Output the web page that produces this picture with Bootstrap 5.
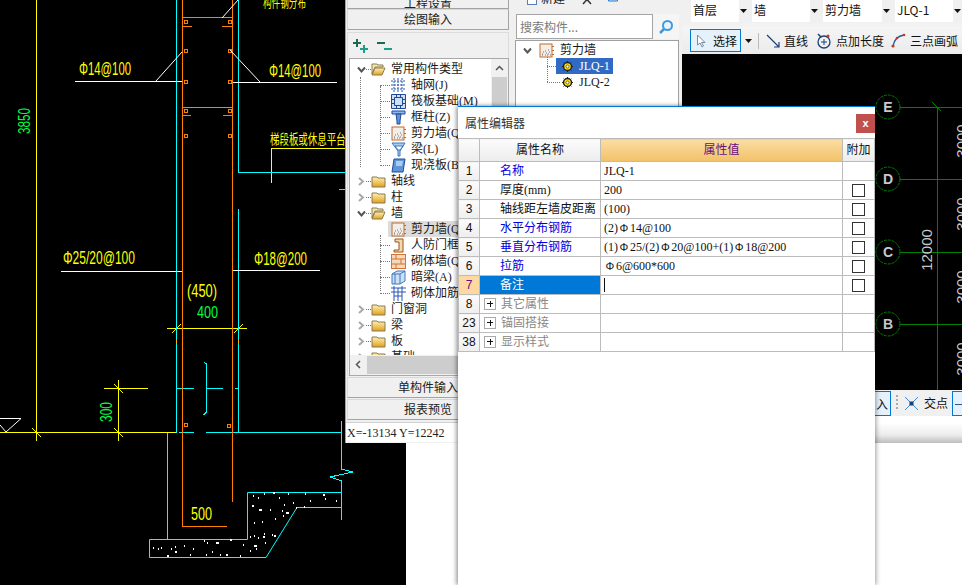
<!DOCTYPE html>
<html lang="zh-CN">
<head>
<meta charset="utf-8">
<title>属性编辑器</title>
<link href="https://cdn.jsdelivr.net/npm/bootstrap@5.3.0/dist/css/bootstrap.min.css" rel="stylesheet">
<style>
html,body{width:962px;height:585px;overflow:hidden;background:#000;margin:0}
body{position:relative;font:12px/16px "Liberation Serif","Noto Sans CJK SC",sans-serif;color:#1a1a1a}
.desk-sheet{position:absolute;left:406px;top:443px;width:556px;height:142px;background:#fff}
.cad-left{position:absolute;left:0;top:0;width:406px;height:585px}
.cad-right{position:absolute;left:682px;top:54px;width:280px;height:340px}
.cad-text{font-family:"Liberation Sans",sans-serif}
.cad-cjk{font-family:"Noto Sans CJK SC",sans-serif}

.win-nav{position:absolute;left:345px;top:0;width:165px;height:443px;background:#f0f0f0;border-left:1px solid #a0a0a0}
.nav-bar{height:21px;margin:0 0 1px 1px;width:162px;background:#f0f0f0;border:1px solid #a3a3a3;border-top-color:#d8d8d8;border-left-color:#d8d8d8;color:#222;border-radius:0;padding:0;font-size:12px;line-height:18px}
.nav-bar.clip-top{height:9px;line-height:0;border-top:0;padding-top:0;overflow:hidden;margin-bottom:0}
.nav-group{height:344px;margin:2px 0 1px 1px;width:162px;border:1px solid #dcdcdc}
.nav-tools{height:25px;padding-left:4px;gap:7px}
.tree-box{width:160px;height:318px;margin-left:1px;border:1px solid #a9a9a9;background:#fff;position:relative;overflow:hidden}
.tree-rows{height:296px;overflow:hidden;padding-top:2px}
.tree-row{height:16px;display:flex;align-items:center;white-space:nowrap;position:relative}
.tree-row svg{flex:none}
.lvl-root{padding-left:7px}
.lvl-kid{padding-left:41px}
.lvl-kid::before{content:"";position:absolute;left:30px;width:10px;top:8px;border-top:1px dotted #777}
.lvl-root::before{content:"";position:absolute;left:16px;width:5px;top:8px;border-top:1px dotted #777}
.tree-row .arrow{width:9px;margin-right:5px;background:#fff;position:relative}
.tree-row .ico{margin-right:5px;position:relative;background:#fff}
.row-current{background:#dcdcdc;margin-left:38px;padding-left:3px;width:120px}
.row-current .ico{background:transparent}
.guide-v{position:absolute;border-left:1px dotted #777;width:0}
.guide-h{position:absolute;border-top:1px dotted #777;height:0}
.g-top-root{left:10px;top:18px;height:90px}
.g-top-kid{left:30px;top:27px;height:76px}
.g-wall-kid{left:30px;top:176px;height:56px}
.vbar{position:absolute;right:0;top:0;width:17px;height:297px;background:#f0f0f0}
.vthumb{position:absolute;left:1px;top:18px;width:15px;height:200px;background:#cdcdcd}
.vup{position:absolute;left:4px;top:6px}
.hbar{position:absolute;left:0;bottom:0;height:20px;width:100%;background:#f0f0f0}
.hthumb{position:absolute;left:17px;top:1px;height:18px;width:140px;background:#cdcdcd}
.hleft{position:absolute;left:5px;top:5px}
.nav-status{height:20px;margin-top:2px;padding-left:1px;background:#fff;border-top:1px solid #d0d0d0;line-height:20px;color:#222}

.win-list{position:absolute;left:510px;top:0;width:172px;height:110px;background:#f0f0f0}
.list-tools{height:13px;padding-left:17px;overflow:hidden;align-items:flex-start}
.list-tools svg{margin-top:-5px}
.list-tools span{line-height:13px;margin:-7px 0 0 4px;width:41px}
.tool-del{margin-right:12px}
.search-row{height:25px;margin:1px 2px 0 6px}
.search-input{width:137px;height:25px;font:12px/20px "Noto Sans CJK SC",sans-serif;border:1px solid #a5a5a5;border-radius:0;padding:0 3px;color:#777;background:#fff}
.search-input::placeholder{color:#7b7b7b;opacity:1}
.search-btn{width:26px;height:25px;background:#f5f5f5;padding:0;border:0;border-radius:0}
.list-tree{width:164px;height:68px;margin:1px 0 0 5px;border:1px solid #a0a0a0;background:#fff;position:relative}
.lt-v{left:31px;top:14px;height:27px}
.lt-h1{left:31px;top:25px;width:9px}
.lt-h2{left:31px;top:41px;width:13px}
.pick-row{position:absolute;height:16px;line-height:16px;display:flex;align-items:center;white-space:nowrap}
.pick-root{left:7px;top:1px}
.pick-root .pick-arrow{margin-right:7px}
.pick-root .pick-ico{margin-right:6px}
.pick-one{left:40px;top:17px;width:57px;padding-left:6px}
.pick-two{left:46px;top:33px}
.pick-gear{margin-right:6px;position:relative}
.pick-on{background:#316ac5;color:#fff}

.win-top{position:absolute;left:682px;top:0;width:280px;height:54px;background:#f2f2f2}
.combo-row{height:23px;padding-left:9px;background:#f0f0f0}
.combo-pick{height:22px;display:flex;background:#fff;font:12px/20px "Noto Sans CJK SC",sans-serif;color:#111;padding-left:2px}
.combo-pick b{font-weight:400;flex:1}
.cp-a{width:57px;margin-right:4px}
.cp-b{width:67px;margin-right:4px}
.cp-c{width:68px;margin-right:4px}
.cp-d{width:67px}
.combo-caret{width:9px;background:#f0f0f0;display:flex;align-items:center;justify-content:center;padding-bottom:1px}
.tool-row{margin-top:4px;height:27px;padding-left:8px;background:linear-gradient(#f5f5f5,#ebebeb);font:12px/16px "Noto Sans CJK SC",sans-serif;color:#111}
.tool-on{width:51px;height:23px;border:1px solid #0078d7;background:#e5f1fb;display:flex;align-items:center;padding-left:5px;gap:7px}
.tool-caret{margin:0 6px 0 4px}
.tool-sep{width:1px;height:16px;background:#bcbcbc}
.tool-item{display:flex;align-items:center;gap:4px;white-space:nowrap;margin-left:8px}
.tool-item.first-item{margin-left:7px}
.tool-item.last-item{margin-left:7px}

.win-strip{position:absolute;left:875px;top:390px;width:87px;height:53px;background:#fff;overflow:hidden}
.strip-tools{height:26px;background:#f0f0f0;font:12px/16px "Noto Sans CJK SC",sans-serif;color:#111;align-items:center;white-space:nowrap}
.strip-tools>*{flex:none}
.strip-on{width:16px;height:25px;border:1px solid #0078d7;border-left:0;background:#e5f1fb;line-height:23px;padding-left:1px}
.strip-on-end{width:12px;height:25px;border:1px solid #0078d7;border-right:0;background:#e5f1fb;position:relative;margin-left:4px}
.strip-on-end i{position:absolute;left:2px;right:0;top:12px;height:1px;background:#2b579a}
.strip-grip{width:2px;height:16px;margin:0 6px 0 5px;background:repeating-linear-gradient(#aaa 0 2px,transparent 2px 4px)}
.strip-x{margin-right:5px}
.strip-gap{height:7px;background:#fff}
.strip-grad{height:20px;background:linear-gradient(#fff,#ececec 60%,#bdbdbd)}

.dlg{position:absolute;left:458px;top:106px;width:417px;height:479px;background:#fff;border-top:1px solid #0078d7;box-shadow:-2px 0 4px rgba(0,0,0,.35),2px 0 4px rgba(0,0,0,.25)}
.dlg-head{height:31px;padding:0 0 0 7px;align-items:center;font:12px/16px "Noto Sans CJK SC",sans-serif;color:#333}
.dlg-close{position:absolute;right:0;top:7px;width:19px;height:19px;background:#c0504d;color:#fff;padding:0;border:0;border-radius:0;font:700 11px/17px "Liberation Sans",sans-serif}
.prop-table.table{width:416px;margin:0;table-layout:fixed;border-collapse:collapse;border-color:#bcbcbc;font-size:12px}
.prop-table.table>:not(caption)>*>*{padding:0;height:19px;border:1px solid #bcbcbc;line-height:17px;vertical-align:middle;color:#111;white-space:nowrap;overflow:hidden;font-weight:400;box-shadow:none;background:transparent}
.col-no{width:21px}.col-name{width:121px}.col-val{width:242px}.col-add{width:32px}
.prop-table.table thead th{height:23px;background:linear-gradient(#fcfcfc,#ececec);text-align:center}
.prop-table.table thead th.head-on{background:linear-gradient(#fbdda3,#f2c168);color:#6a0f80}
.prop-table.table td.cell-no{background:linear-gradient(#fbfbfb,#eeeeee);text-align:center;font-family:"Liberation Sans",sans-serif}
.prop-table.table td.cell-no-on{background:#fdd9a0;color:#6a0f80}
.prop-table.table td.cell-name{padding-left:20px}
.prop-table.table td.cell-link{color:#0000e0}
.prop-table.table td.cell-on{background:#0078d7;color:#fff}
.prop-table.table td.cell-val{padding-left:3px}
.prop-table.table td.cell-mute{color:#888;padding-left:4px}
.prop-table.table td.cell-tick{text-align:center}
.tick-box{width:13px;height:13px;margin:2px 0 0;border:1px solid #333;display:inline-block;vertical-align:top}
.plus-box{display:inline-block;width:12px;height:12px;border:1px solid #aaa;margin-right:5px;vertical-align:-2px;position:relative}
.plus-box::before{content:"";position:absolute;left:2px;right:2px;top:4.5px;height:1px;background:#111}
.plus-box::after{content:"";position:absolute;top:2px;bottom:2px;left:4.5px;width:1px;background:#111}
.caret-bar{display:inline-block;width:1px;height:14px;background:#111;vertical-align:-3px}
.rebar{display:inline-block;width:12px;text-align:center;font-family:"Liberation Sans",sans-serif;font-size:11px}
</style>
</head>
<body>
<svg width="0" height="0" class="d-block position-absolute">
<defs>
<linearGradient id="fold" x1="0" y1="0" x2="0" y2="1"><stop offset="0" stop-color="#fff2b0"/><stop offset="1" stop-color="#e0a020"/></linearGradient>
<symbol id="i-folder" viewBox="0 0 15 13"><path d="M1 2h5l1 1h7v9H1z" fill="url(#fold)" stroke="#8a7a50"/></symbol>
<symbol id="i-open" viewBox="0 0 15 13"><path d="M1 1h5l1 1h5v2H4L1 11z" fill="#f8e9b0" stroke="#8a7a50"/><path d="M1 12l3-7h10l-3 7z" fill="url(#fold)" stroke="#8a7a50"/></symbol>
<symbol id="i-grid" viewBox="0 0 15 15"><path d="M3 0v15M7 0v15M11 0v15M0 3h15M0 7h15M0 11h15" stroke="#2a55b0" stroke-dasharray="2 1" fill="none"/></symbol>
<symbol id="i-raft" viewBox="0 0 15 15"><path d="M.5.5h14v14H.5zM3.5 3.5h8v8h-8z" stroke="#1f4a9a" fill="#cfe0f5"/><path d="M5.5.5v3M9.5.5v3M5.5 11.5v3M9.5 11.5v3M.5 5.5h3M.5 9.5h3M11.5 5.5h3M11.5 9.5h3" stroke="#1f4a9a"/></symbol>
<symbol id="i-col" viewBox="0 0 15 15"><path d="M1 1h13v3H1z" fill="#8fb8e8" stroke="#1f4a9a"/><path d="M5 4h5l-1 7v3H6v-3z" fill="#5f95d8" stroke="#1f4a9a"/></symbol>
<symbol id="i-wall" viewBox="0 0 15 15"><rect x="1" y="1" width="12" height="13" fill="#f3eee8" stroke="#c46a2a"/><path d="M3 11h1M6 12h1M9 11h1M11 12h1M4 9h1M7 10h1M10 9h1M3 12h1M8 12h1M6 8h1M9 7h1" stroke="#777"/><path d="M14 3v1M14 7v1M14 11v1" stroke="#c46a2a" stroke-width="2"/></symbol>
<symbol id="i-beam" viewBox="0 0 15 15"><path d="M1 1h13L9 9v5H7V9z" fill="#a9cdf0" stroke="#3a78c0"/><path d="M4 4h8l-3 4H7z" fill="#fff" stroke="#3a78c0"/></symbol>
<symbol id="i-slab" viewBox="0 0 15 15"><path d="M3 1h11l-2 13H1z" fill="#5f95d8" stroke="#1f4a9a"/><path d="M5 3h7l-1 5H5z" fill="#a9cdf0"/></symbol>
<symbol id="i-door" viewBox="0 0 15 15"><path d="M4 1h8v13H3v-2h5V4H4z" fill="#f3d9b0" stroke="#a0521a"/></symbol>
<symbol id="i-brick" viewBox="0 0 15 15"><rect x="0.500" y="0.500" width="14" height="14" fill="#f7d8b8" stroke="#d0743a"/><path d="M.5 5h14M.5 10h14M5 .5V5M10 5v5M5 10v4.500" stroke="#d0743a"/></symbol>
<symbol id="i-hide" viewBox="0 0 15 15"><path d="M1 4l5-3h8v10l-5 3H1z" fill="#cfe0f5" stroke="#3a78c0"/><path d="M1 4h8v10M9 4l5-3" stroke="#3a78c0" fill="none"/><path d="M4 4v10" stroke="#3a78c0"/></symbol>
<symbol id="i-rein" viewBox="0 0 15 15"><path d="M0 2h15M0 6h15M3 0v15M11 0v15M7 2v13M3 10h8" stroke="#2a55b0" fill="none"/></symbol>
<symbol id="i-chev" viewBox="0 0 9 9"><path d="M2 1l4 3.500L2 8" stroke="#a8a8a8" stroke-width="2" fill="none"/></symbol>
<symbol id="i-down" viewBox="0 0 9 9"><path d="M1 2.500l3.500 4 3.500-4" stroke="#555" stroke-width="2" fill="none"/></symbol>
<symbol id="i-gear" viewBox="0 0 11 11"><circle cx="5.500" cy="5.500" r="4" fill="#ffe000" stroke="#222" stroke-width="1.500"/><circle cx="5.500" cy="5.500" r="1.500" fill="#fff" stroke="#222" stroke-width=".6"/><path d="M5.500 0v1.500M5.500 9.500V11M0 5.500h1.500M9.500 5.500H11M1.600 1.600l1 1M8.400 8.400l1 1M1.600 9.400l1-1M8.400 2.600l1-1" stroke="#222"/></symbol>
<symbol id="i-caret" viewBox="0 0 7 4"><path d="M0 0h7L3.500 4z" fill="#111"/></symbol>
</defs>
</svg>

<div class="desk-sheet"></div>

<!-- left CAD detail drawing -->
<svg class="cad-left" viewBox="0 0 406 585" shape-rendering="crispEdges">
  <g stroke="#ffff00" fill="none">
    <path d="M36.500 0V441M0 432.500H176M118.500 380V441M104 388.500H148M167 328.500H247M271.500 183V148.500H345"/>
    <path d="M32 428l9 9M114 428l9 9M114 384l9 9M172 333l9-9M234 333l9-9"/>
  </g>
  <g stroke="#00ffff" fill="none">
    <path d="M176.500 0V432.500M238.500 0V172.500H345M238.500 208.500V432.500M238.500 432.500H341.500M179 432.500H194M206 432.500H238M176.500 388.500H194M206.500 388.500H223M235 388.500H238.500M167.500 432.500V539.500"/>
    <path d="M204 362l2.500 2V412l-3 3"/>
    <path d="M341.500 421V469L353 472 330 477 341.500 481V520"/>
    <path d="M149.500 539.500H247.500V492.500H341.500M341.500 507.500H297L266 557.500H149.500V539.500" shape-rendering="auto"/>
    <path d="M339 189h6"/>
  </g>
  <g stroke="#ff7f00" fill="none">
    <path d="M182.500 0V526.500H227M232.500 0V502M182 17.500H232M182 26.500H192M222 26.500H232M182 107.500H232M182 115.500H191M223 115.500H232"/>
    <path d="M184 20h3v3h-3zM228 20h3v3h-3zM184 49h3v3h-3zM228 49h3v3h-3zM184 80h3v3h-3zM228 80h3v3h-3zM184 109h3v3h-3zM228 109h3v3h-3zM184 134h3v3h-3zM228 134h3v3h-3zM184 423h3v3h-3zM227 424h3v3h-3z"/>
  </g>
  <path d="M176 340h1v3h-1zM238 340h1v3h-1z" fill="#ffb000"/>
  <g stroke="#fff" fill="none">
    <path d="M75 81.500H182M233 82.500H337M61 271.500H182M233 270.500H320"/>
    <path d="M156 81l26-29M260 82L230 50M222 18L238 0M0 418.500H21L6 432 0 425" shape-rendering="auto"/>
    <path d="M253 496h1M258 498h1M264 494h1M273 493h2M288 494h1M305 494h1M323 495h2M325 499h1M336 501h1M310 501h1M293 503h1M279 498h1M284 505h1M252 506h2M259 510h3M270 510h1M282 511h1M286 513h3M296 508h1M304 507h1M254 523h1M262 522h1M275 519h1M283 516h1M264 534h1M250 537h1M258 538h1M274 536h2M263 537h2M153 548h1M158 549h1M161 548h1M171 549h1M175 547h1M184 546h1M193 549h1M204 541h1M207 543h1M216 543h3M230 540h2M243 545h1M254 546h3M256 549h1M250 551h1M167 556h2M175 552h2M190 555h1M206 555h1M212 552h1M220 555h1M226 555h2M240 556h1M265 543h1M272 535h1M254 536h1" stroke-width="1.300"/>
  </g>
  <g class="cad-text" fill="#ffff00" font-size="18">
    <text x="79" y="75" textLength="52" lengthAdjust="spacingAndGlyphs">Φ14@100</text>
    <text x="269" y="77" textLength="52" lengthAdjust="spacingAndGlyphs">Φ14@100</text>
    <text x="63" y="264" textLength="72" lengthAdjust="spacingAndGlyphs">Φ25/20@100</text>
    <text x="254" y="265" textLength="53" lengthAdjust="spacingAndGlyphs">Φ18@200</text>
    <text x="187" y="297" textLength="30" lengthAdjust="spacingAndGlyphs">(450)</text>
    <text x="191" y="520" textLength="21" lengthAdjust="spacingAndGlyphs">500</text>
  </g>
  <g class="cad-cjk" fill="#ffff00">
    <text x="263" y="7" font-size="13" textLength="43" lengthAdjust="spacingAndGlyphs">构件钢分布</text>
    <text x="270" y="144" font-size="14" textLength="85" lengthAdjust="spacingAndGlyphs">梯段板或休息平台板</text>
  </g>
  <g class="cad-text" fill="#00ff40" font-size="17">
    <text x="197" y="318" textLength="21" lengthAdjust="spacingAndGlyphs">400</text>
    <text transform="translate(30 134) rotate(-90)" textLength="26" lengthAdjust="spacingAndGlyphs">3850</text>
    <text transform="translate(112 422) rotate(-90)" textLength="20" lengthAdjust="spacingAndGlyphs">300</text>
  </g>
</svg>

<!-- right CAD plan -->
<svg class="cad-right" viewBox="0 0 280 340">
  <g stroke="#008000" fill="none" shape-rendering="crispEdges">
    <path d="M218 53.500H280M255.500 53.500V340M218 125.500H280M218 198.500H280M218 270.500H280"/>
  </g>
  <path d="M250 48l9 9" stroke="#008000"/>
  <g stroke="#008000" fill="none" stroke-dasharray="3 1">
    <circle cx="206" cy="53" r="12"/><circle cx="206" cy="125" r="12"/><circle cx="206" cy="198" r="12"/><circle cx="206" cy="270" r="12"/>
  </g>
  <g class="cad-text" fill="#c8c8c8" font-size="14" font-weight="700" text-anchor="middle">
    <text x="206" y="58">E</text><text x="206" y="130">D</text><text x="206" y="203">C</text><text x="206" y="275">B</text>
  </g>
  <g class="cad-text" fill="#c8c8c8" font-size="15" text-anchor="middle">
    <text transform="translate(250 196) rotate(-90)">12000</text>
    <text transform="translate(285 87) rotate(-90)">3000</text>
    <text transform="translate(285 160) rotate(-90)">3000</text>
    <text transform="translate(285 233) rotate(-90)">3000</text>
    <text transform="translate(285 305) rotate(-90)">3000</text>
  </g>
</svg>

<!-- navigation window -->
<div class="win-nav">
  <button class="btn nav-bar clip-top d-block">工程设置</button>
  <button class="btn nav-bar d-block">绘图输入</button>
  <div class="nav-group">
    <div class="d-flex align-items-center nav-tools">
      <svg width="17" height="15" viewBox="0 0 17 15"><path d="M1 5h8M5 1v8" stroke="#1d6b4f" stroke-width="2"/><path d="M8 11h8M12 7v8" stroke="#1aa08a" stroke-width="2"/></svg>
      <svg width="17" height="15" viewBox="0 0 17 15"><path d="M1 5h8" stroke="#1d6b4f" stroke-width="2"/><path d="M8 11h8" stroke="#1aa08a" stroke-width="2"/></svg>
    </div>
    <div class="tree-box">
      <div class="guide-v g-top-root"></div>
      <div class="guide-v g-top-kid"></div>
      <div class="guide-v g-wall-kid"></div>
      <div class="tree-rows">
        <div class="tree-row lvl-root"><svg class="arrow" width="9" height="9"><use href="#i-down"/></svg><svg class="ico" width="15" height="13"><use href="#i-open"/></svg>常用构件类型</div>
        <div class="tree-row lvl-kid"><svg class="ico" width="15" height="15"><use href="#i-grid"/></svg>轴网(J)</div>
        <div class="tree-row lvl-kid"><svg class="ico" width="15" height="15"><use href="#i-raft"/></svg>筏板基础(M)</div>
        <div class="tree-row lvl-kid"><svg class="ico" width="15" height="15"><use href="#i-col"/></svg>框柱(Z)</div>
        <div class="tree-row lvl-kid"><svg class="ico" width="15" height="15"><use href="#i-wall"/></svg>剪力墙(Q)</div>
        <div class="tree-row lvl-kid"><svg class="ico" width="15" height="15"><use href="#i-beam"/></svg>梁(L)</div>
        <div class="tree-row lvl-kid"><svg class="ico" width="15" height="15"><use href="#i-slab"/></svg>现浇板(B)</div>
        <div class="tree-row lvl-root"><svg class="arrow" width="9" height="9"><use href="#i-chev"/></svg><svg class="ico" width="15" height="13"><use href="#i-folder"/></svg>轴线</div>
        <div class="tree-row lvl-root"><svg class="arrow" width="9" height="9"><use href="#i-chev"/></svg><svg class="ico" width="15" height="13"><use href="#i-folder"/></svg>柱</div>
        <div class="tree-row lvl-root"><svg class="arrow" width="9" height="9"><use href="#i-down"/></svg><svg class="ico" width="15" height="13"><use href="#i-open"/></svg>墙</div>
        <div class="tree-row row-current"><svg class="ico" width="15" height="15"><use href="#i-wall"/></svg>剪力墙(Q)</div>
        <div class="tree-row lvl-kid"><svg class="ico" width="15" height="15"><use href="#i-door"/></svg>人防门框(R)</div>
        <div class="tree-row lvl-kid"><svg class="ico" width="15" height="15"><use href="#i-brick"/></svg>砌体墙(Q)</div>
        <div class="tree-row lvl-kid"><svg class="ico" width="15" height="15"><use href="#i-hide"/></svg>暗梁(A)</div>
        <div class="tree-row lvl-kid"><svg class="ico" width="15" height="15"><use href="#i-rein"/></svg>砌体加筋(Y)</div>
        <div class="tree-row lvl-root"><svg class="arrow" width="9" height="9"><use href="#i-chev"/></svg><svg class="ico" width="15" height="13"><use href="#i-folder"/></svg>门窗洞</div>
        <div class="tree-row lvl-root"><svg class="arrow" width="9" height="9"><use href="#i-chev"/></svg><svg class="ico" width="15" height="13"><use href="#i-folder"/></svg>梁</div>
        <div class="tree-row lvl-root"><svg class="arrow" width="9" height="9"><use href="#i-chev"/></svg><svg class="ico" width="15" height="13"><use href="#i-folder"/></svg>板</div>
        <div class="tree-row lvl-root"><svg class="arrow" width="9" height="9"><use href="#i-chev"/></svg><svg class="ico" width="15" height="13"><use href="#i-folder"/></svg>基础</div>
      </div>
      <div class="vbar"><svg class="vup" width="9" height="6" viewBox="0 0 9 6"><path d="M1 5l3.500-3.500L8 5" stroke="#555" stroke-width="1.500" fill="none"/></svg><div class="vthumb"></div></div>
      <div class="hbar"><svg class="hleft" width="6" height="9" viewBox="0 0 6 9"><path d="M5 1L1.500 4.500 5 8" stroke="#555" stroke-width="1.500" fill="none"/></svg><div class="hthumb"></div></div>
    </div>
  </div>
  <button class="btn nav-bar d-block">单构件输入</button>
  <button class="btn nav-bar d-block">报表预览</button>
  <div class="nav-status">X=-13134 Y=12242</div>
</div>

<!-- component list window -->
<div class="win-list">
  <div class="d-flex list-tools">
    <svg width="10" height="10" viewBox="0 0 10 10"><rect x=".5" y=".5" width="9" height="9" fill="#fff" stroke="#5a7fb0"/></svg>
    <span>新建 · </span>
    <svg class="tool-del" width="10" height="10" viewBox="0 0 10 10"><path d="M1 0l8 9M9 0L1 9" stroke="#333" stroke-width="1.500"/></svg>
    <svg width="14" height="10" viewBox="0 0 14 10"><path d="M4.500 0v6h9V0M1 3h4" stroke="#2a78c8" fill="#cfe6fa"/></svg>
  </div>
  <div class="d-flex search-row">
    <input class="form-control search-input" type="text" placeholder="搜索构件...">
    <button class="btn search-btn d-flex align-items-center justify-content-center" aria-label="搜索">
      <svg width="16" height="16" viewBox="0 0 16 16"><circle cx="9.500" cy="6.500" r="4.500" fill="#e8f4fc" stroke="#3a9be0" stroke-width="2"/><path d="M6 10l-4 4" stroke="#3a9be0" stroke-width="2.500"/></svg>
    </button>
  </div>
  <div class="list-tree">
    <div class="guide-v lt-v"></div>
    <div class="guide-h lt-h1"></div>
    <div class="guide-h lt-h2"></div>
    <div class="pick-row pick-root"><svg class="pick-arrow" width="9" height="9"><use href="#i-down"/></svg><svg class="pick-ico" width="15" height="15"><use href="#i-wall"/></svg>剪力墙</div>
    <div class="pick-row pick-on pick-one"><svg class="pick-gear" width="11" height="11"><use href="#i-gear"/></svg>JLQ-1</div>
    <div class="pick-row pick-two"><svg class="pick-gear" width="11" height="11"><use href="#i-gear"/></svg>JLQ-2</div>
  </div>
</div>

<!-- top toolbars -->
<div class="win-top">
  <div class="d-flex combo-row">
    <div class="combo-pick cp-a"><b>首层</b><span class="combo-caret"><svg width="7" height="4"><use href="#i-caret"/></svg></span></div>
    <div class="combo-pick cp-b"><b>墙</b><span class="combo-caret"><svg width="7" height="4"><use href="#i-caret"/></svg></span></div>
    <div class="combo-pick cp-c"><b>剪力墙</b><span class="combo-caret"><svg width="7" height="4"><use href="#i-caret"/></svg></span></div>
    <div class="combo-pick cp-d"><b>JLQ-1</b><span class="combo-caret"><svg width="7" height="4"><use href="#i-caret"/></svg></span></div>
  </div>
  <div class="d-flex align-items-center tool-row">
    <div class="tool-on">
      <svg width="10" height="14" viewBox="0 0 10 14"><path d="M1.500 1v10l2.500-2 2 4 1.500-1-2-3.500H9z" fill="#fff" stroke="#7a8aa0"/></svg>
      <span>选择</span>
    </div>
    <svg class="tool-caret" width="7" height="4"><use href="#i-caret"/></svg>
    <span class="tool-sep"></span>
    <div class="tool-item first-item"><svg width="14" height="14" viewBox="0 0 14 14"><path d="M1 1l12 12M13 8v5H8" stroke="#1c3f78" fill="none" stroke-width="1.200"/></svg>直线</div>
    <div class="tool-item"><svg width="16" height="16" viewBox="0 0 16 16"><circle cx="8" cy="9" r="6" fill="none" stroke="#1c3f78" stroke-width="1.300"/><path d="M5 9h6M8 6v6" stroke="#1c3f78"/><path d="M2 1l3 3" stroke="#1c3f78" stroke-width="1.500"/><circle cx="12" cy="3" r="1.500" fill="#c0392b"/></svg>点加长度</div>
    <div class="tool-item last-item"><svg width="15" height="15" viewBox="0 0 15 15"><path d="M2 13C3 7 7 3 13 2" fill="none" stroke="#2a55a0" stroke-width="1.300"/><circle cx="2" cy="13" r="1.600" fill="#c0392b"/><circle cx="6" cy="5" r="1.300" fill="#c0392b"/><circle cx="13" cy="2" r="1.300" fill="#c0392b"/></svg>三点画弧</div>
  </div>
</div>

<!-- bottom-right strip behind the dialog -->
<div class="win-strip">
  <div class="d-flex strip-tools">
    <span class="strip-on">入</span>
    <span class="strip-grip"></span>
    <svg class="strip-x" width="15" height="15" viewBox="0 0 15 15"><path d="M1 1l13 13M14 1L1 14" stroke="#3a8ee0"/><rect x="5.500" y="5.500" width="4" height="4" fill="#1c3f78"/></svg>
    <span>交点</span>
    <span class="strip-on-end"><i></i></span>
  </div>
  <div class="strip-gap"></div>
  <div class="strip-grad"></div>
</div>

<!-- property editor dialog -->
<div class="dlg">
  <div class="d-flex dlg-head">属性编辑器<button class="btn dlg-close" aria-label="关闭">x</button></div>
  <table class="table prop-table">
    <colgroup><col class="col-no"><col class="col-name"><col class="col-val"><col class="col-add"></colgroup>
    <thead>
      <tr><th></th><th>属性名称</th><th class="head-on">属性值</th><th>附加</th></tr>
    </thead>
    <tbody>
      <tr><td class="cell-no">1</td><td class="cell-name cell-link">名称</td><td class="cell-val">JLQ-1</td><td></td></tr>
      <tr><td class="cell-no">2</td><td class="cell-name">厚度(mm)</td><td class="cell-val">200</td><td class="cell-tick"><span class="tick-box"></span></td></tr>
      <tr><td class="cell-no">3</td><td class="cell-name">轴线距左墙皮距离</td><td class="cell-val">(100)</td><td class="cell-tick"><span class="tick-box"></span></td></tr>
      <tr><td class="cell-no">4</td><td class="cell-name cell-link">水平分布钢筋</td><td class="cell-val">(2)<span class="rebar">Φ</span>14@100</td><td class="cell-tick"><span class="tick-box"></span></td></tr>
      <tr><td class="cell-no">5</td><td class="cell-name cell-link">垂直分布钢筋</td><td class="cell-val">(1)<span class="rebar">Φ</span>25/(2)<span class="rebar">Φ</span>20@100+(1)<span class="rebar">Φ</span>18@200</td><td class="cell-tick"><span class="tick-box"></span></td></tr>
      <tr><td class="cell-no">6</td><td class="cell-name cell-link">拉筋</td><td class="cell-val"><span class="rebar">Φ</span>6@600*600</td><td class="cell-tick"><span class="tick-box"></span></td></tr>
      <tr><td class="cell-no cell-no-on">7</td><td class="cell-name cell-on">备注</td><td class="cell-val"><span class="caret-bar"></span></td><td class="cell-tick"><span class="tick-box"></span></td></tr>
      <tr><td class="cell-no">8</td><td class="cell-mute"><span class="plus-box"></span>其它属性</td><td></td><td></td></tr>
      <tr><td class="cell-no">23</td><td class="cell-mute"><span class="plus-box"></span>锚固搭接</td><td></td><td></td></tr>
      <tr><td class="cell-no">38</td><td class="cell-mute"><span class="plus-box"></span>显示样式</td><td></td><td></td></tr>
    </tbody>
  </table>
</div>
<script src="https://cdn.jsdelivr.net/npm/bootstrap@5.3.0/dist/js/bootstrap.bundle.min.js"></script>
</body>
</html>
